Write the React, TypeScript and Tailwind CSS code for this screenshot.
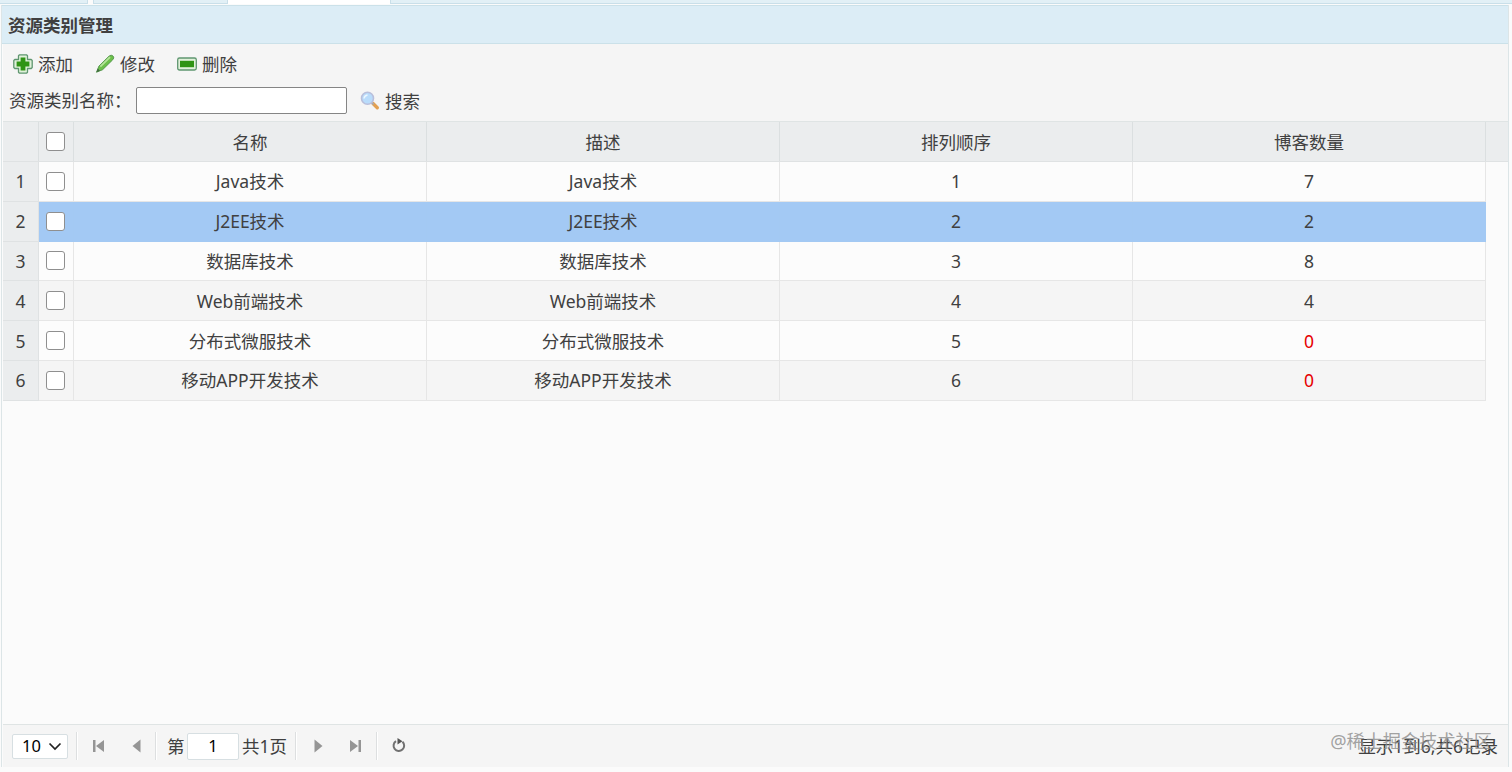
import type { ReactNode } from 'react';
import { clsx } from 'clsx';

interface Category {
  name: string;
  description: string;
  order: number;
  blogs: number;
}

const categories: Category[] = [
  { name: 'Java技术', description: 'Java技术', order: 1, blogs: 7 },
  { name: 'J2EE技术', description: 'J2EE技术', order: 2, blogs: 2 },
  { name: '数据库技术', description: '数据库技术', order: 3, blogs: 8 },
  { name: 'Web前端技术', description: 'Web前端技术', order: 4, blogs: 4 },
  { name: '分布式微服技术', description: '分布式微服技术', order: 5, blogs: 0 },
  { name: '移动APP开发技术', description: '移动APP开发技术', order: 6, blogs: 0 },
];

const headers = ['名称', '描述', '排列顺序', '博客数量'];
const selected = 1;

function AddIcon() {
  return (
    <svg width="20" height="20" viewBox="0 0 20 20">
      <path d="M6.500 .8h7l1 1v3.700h3.700l1 1v7l-1 1h-3.700v3.700l-1 1h-7l-1-1v-3.700H1.800l-1-1v-7l1-1h3.700V1.800z" fill="#e0f1da" stroke="#5f9670" strokeWidth="1.300" strokeLinejoin="round" />
      <path d="M7.600 3.600h4.800v4h4v4.800h-4v4H7.600v-4h-4V7.600h4z" fill="#2f9414" />
    </svg>
  );
}

function EditIcon() {
  return (
    <svg width="20" height="20" viewBox="0 0 20 20">
      <path d="M1.500 18.200L4 12 14 2.200q2.200-2 4-.2t-.4 3.900L7.600 15.700z" fill="#6cc04a" stroke="#5a9a52" strokeLinejoin="round" />
      <path d="M5.300 12.700L15 3.200" stroke="#b5e39b" strokeWidth="1.800" />
      <path d="M1.500 18.200l1.300-3.600 2.200 2.200z" fill="#426b40" />
    </svg>
  );
}

function RemoveIcon() {
  return (
    <svg width="20" height="20" viewBox="0 0 20 20">
      <rect x=".7" y="4" width="18.600" height="12" rx="1.800" fill="#e0f1da" stroke="#5f9670" strokeWidth="1.300" />
      <rect x="3" y="6.800" width="14" height="6.400" fill="#2f9414" />
    </svg>
  );
}

function SearchIcon() {
  return (
    <svg width="20" height="20" viewBox="0 0 20 20">
      <path d="M13 12.500l4.300 4.300" stroke="#e2a052" strokeWidth="3.400" strokeLinecap="round" />
      <path d="M11 11l2.500 2.400" stroke="#a7a9b4" strokeWidth="2" />
      <circle cx="7.500" cy="7.200" r="6" fill="#b9dcfb" stroke="#b9bfdb" strokeWidth="1.600" />
      <path d="M4 7.500q.5-3 3.500-3.500" fill="none" stroke="#edf7ff" strokeWidth="1.500" />
    </svg>
  );
}

function LinkButton({ icon, children }: { icon: ReactNode; children: ReactNode }) {
  return (
    <button type="button" className="flex h-6 items-center gap-[5px] whitespace-nowrap">
      {icon}
      <span>{children}</span>
    </button>
  );
}

function CheckBox() {
  return (
    <input
      type="checkbox"
      className="block size-[19px] appearance-none rounded-[3px] border border-[#8f8f8f] bg-white"
    />
  );
}

function Toolbar() {
  return (
    <div className="h-[78px] border-b border-[#dfe4e4] bg-[#f5f5f5]">
      <div className="flex h-10 items-center gap-[22px] pl-[10px]">
        <LinkButton icon={<AddIcon />}>添加</LinkButton>
        <LinkButton icon={<EditIcon />}>修改</LinkButton>
        <LinkButton icon={<RemoveIcon />}>删除</LinkButton>
      </div>
      <div className="flex h-8 items-center pl-[6px]">
        <label htmlFor="category" className="w-[127px] whitespace-nowrap">资源类别名称：</label>
        <input id="category" className="h-[27px] w-[211px] rounded-[2px] border border-[#858585] bg-white px-1 outline-none" />
        <div className="pt-[2px] pl-[13px]">
          <LinkButton icon={<SearchIcon />}>搜索</LinkButton>
        </div>
      </div>
    </div>
  );
}

function HeaderRow() {
  return (
    <div className="flex h-10 border-b border-[#dfe2e3] bg-[#ebedee]">
      <div className="w-[36px] border-r border-[#dbdfe0]" />
      <div className="flex w-[35px] items-center border-r border-[#dbdfe0] pl-[7px]">
        <CheckBox />
      </div>
      {headers.map((title) => (
        <div key={title} className="flex w-[353px] items-center justify-center border-r border-[#dbdfe0]">
          {title}
        </div>
      ))}
    </div>
  );
}

function CategoryRow({ row, index }: { row: Category; index: number }) {
  const active = index === selected;
  const cell = clsx(
    'flex w-[353px] items-center justify-center border-r border-b',
    active ? 'border-[#a3c9f3]' : 'border-[#e6e6e6]',
  );

  return (
    <div className="flex h-[39.8px]">
      <div className="flex w-[36px] items-center justify-center border-r border-b border-[#dfe2e3] bg-[#ebedee]">
        {index + 1}
      </div>
      <div className={clsx('flex', active ? 'bg-[#a3c9f4]' : index % 2 ? 'bg-[#f5f5f5]' : 'bg-[#fcfcfc]')}>
        <div
          className={clsx(
            'flex w-[35px] items-center border-r border-b pl-[7px]',
            active ? 'border-[#a3c9f3]' : 'border-[#e6e6e6]',
          )}
        >
          <CheckBox />
        </div>
        <div className={cell}>{row.name}</div>
        <div className={cell}>{row.description}</div>
        <div className={cell}>{row.order}</div>
        <div className={cell}>
          <span className={clsx(row.blogs === 0 && 'text-[#e60000]')}>{row.blogs}</span>
        </div>
      </div>
    </div>
  );
}

function Separator() {
  return <div className="h-7 w-0.5 border-r border-l border-r-white border-l-[#dddfe0]" />;
}

function Pager() {
  return (
    <div className="flex h-[43px] items-center border-t border-[#dfe4e4] bg-[#f5f5f5] pl-[9px]">
      <div className="flex h-[25px] w-14 items-center justify-between rounded-[2px] border border-[#d7dfe2] bg-white pr-[5px] pl-[9px] text-[16.500px] text-black">
        10
        <svg width="14" height="14" viewBox="0 0 14 14" fill="none" stroke="#222" strokeWidth="1.700">
          <path d="M1.500 4.500L7 10l5.500-5.500" />
        </svg>
      </div>
      <div className="ml-2">
        <Separator />
      </div>
      <svg className="ml-[15px]" width="12" height="14" viewBox="0 0 12 14" fill="#959595">
        <path d="M0 1h2.500v12H0zM11 1v12L3 7z" />
      </svg>
      <svg className="ml-[27px]" width="9" height="14" viewBox="0 0 9 14" fill="#959595">
        <path d="M8.500 .5v13L.5 7z" />
      </svg>
      <div className="ml-[14px]">
        <Separator />
      </div>
      <span className="ml-[10px] w-[20px] whitespace-nowrap">第</span>
      <input
        className="h-[27px] w-[52px] rounded-[2px] border border-[#d7dfe2] bg-white pb-0.5 text-center text-[16.500px] text-black outline-none"
        defaultValue="1"
      />
      <span className="ml-[3px] w-[45px] whitespace-nowrap">共1页</span>
      <div className="ml-[8px]">
        <Separator />
      </div>
      <svg className="ml-[17px]" width="9" height="14" viewBox="0 0 9 14" fill="#959595">
        <path d="M.5 .5v13l8-6.500z" />
      </svg>
      <svg className="ml-[27px]" width="12" height="14" viewBox="0 0 12 14" fill="#959595">
        <path d="M8.500 1H11v12H8.500zM0 1v12l8-6z" />
      </svg>
      <div className="ml-[14px]">
        <Separator />
      </div>
      <svg className="ml-[13px]" width="16" height="16" viewBox="0 0 16 16">
        <path d="M5 3.200A5.300 5.300 0 1 0 11.500 3.800" fill="none" stroke="#717171" strokeWidth="2" />
        <path d="M6.500 0l5 3.300L6.500 6.500z" fill="#555" />
      </svg>
      <div className="relative mr-[10px] ml-auto whitespace-nowrap">
        显示1到6,共6记录
        <span className="absolute top-[-5px] right-[6px] text-[18.200px] text-[#8b8b8b]/80">@稀土掘金技术社区</span>
      </div>
    </div>
  );
}

export default function App() {
  return (
    <div className="flex h-[772px] w-[1512px] flex-col overflow-hidden bg-[#fbfbfb] font-['Noto_Sans','Noto_Sans_CJK_SC',sans-serif] text-[17.500px] leading-6 text-[#404040]">
      <div className="flex h-[5px] pb-px">
        <div className="w-[88px] border-r border-b border-[#c9dfe9] bg-[#e2f0f6]" />
        <div className="ml-[5px] w-[135px] border-r border-b border-l border-[#c9dfe9] bg-[#e2f0f6]" />
        <div className="w-[162px] bg-white" />
        <div className="flex-1 border-b border-l border-[#c9dfe9] bg-[#e2f0f6]" />
      </div>
      <div className="mr-[3px] ml-px flex h-[762px] flex-col border-r border-l border-[#dce5e7] pl-px">
        <div className="-ml-px flex h-[39px] shrink-0 items-center border-t border-b border-[#cbe1e9] bg-[#dcedf6] pt-px pl-1.5 font-bold">
          资源类别管理
        </div>
        <Toolbar />
        <HeaderRow />
        <div className="flex-1">
          {categories.map((row, index) => (
            <CategoryRow key={index} row={row} index={index} />
          ))}
        </div>
        <Pager />
      </div>
    </div>
  );
}
